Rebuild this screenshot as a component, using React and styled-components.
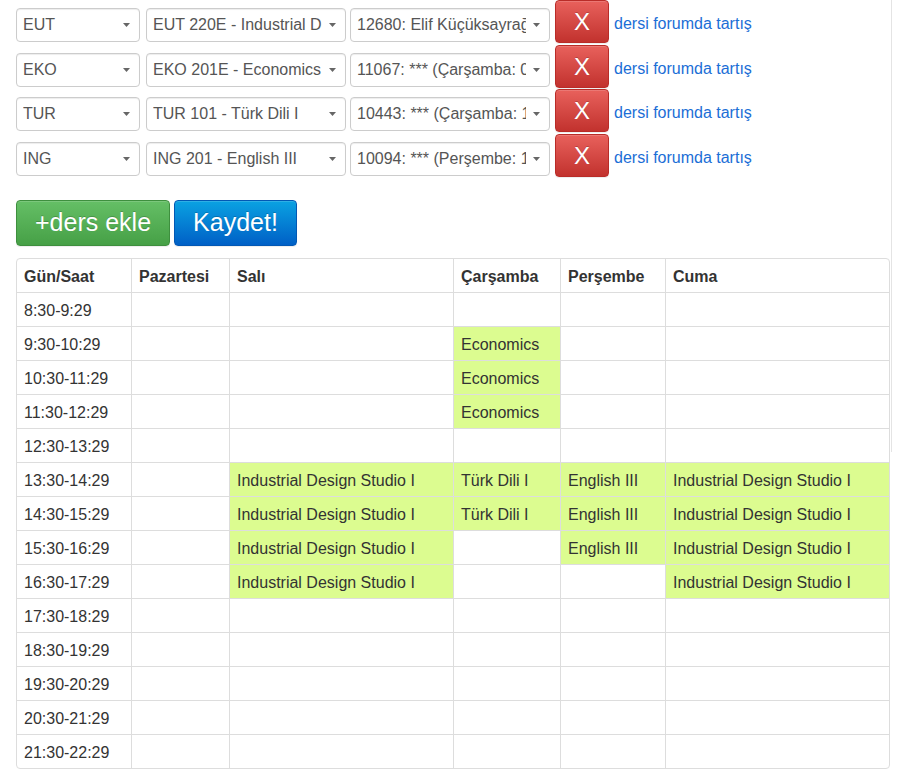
import React from 'react'
import styled, {createGlobalStyle} from 'styled-components'

const GlobalStyle = createGlobalStyle`
  body {
    margin: 0;
    background: #fff;
    font-family: "Liberation Sans", Arial, sans-serif;
    font-size: 16px;
    color: #333;
  }
`

const courses = [
  {dept: 'EUT', course: 'EUT 220E - Industrial Design Studio I', crn: '12680: Elif Küçüksayrağı (Salı: 13:30-17:29)'},
  {dept: 'EKO', course: 'EKO 201E - Economics', crn: '11067: *** (Çarşamba: 09:30-12:29)'},
  {dept: 'TUR', course: 'TUR 101 - Türk Dili I', crn: '10443: *** (Çarşamba: 13:30-15:29)'},
  {dept: 'ING', course: 'ING 201 - English III', crn: '10094: *** (Perşembe: 13:30-16:29)'},
]

const days = ['Pazartesi', 'Salı', 'Çarşamba', 'Perşembe', 'Cuma']
const colWidths = [114, 98, 224, 107, 105, 224]

const IDS = 'Industrial Design Studio I'
const schedule = {
  '9:30-10:29': {'Çarşamba': 'Economics'},
  '10:30-11:29': {'Çarşamba': 'Economics'},
  '11:30-12:29': {'Çarşamba': 'Economics'},
  '13:30-14:29': {'Salı': IDS, 'Çarşamba': 'Türk Dili I', 'Perşembe': 'English III', 'Cuma': IDS},
  '14:30-15:29': {'Salı': IDS, 'Çarşamba': 'Türk Dili I', 'Perşembe': 'English III', 'Cuma': IDS},
  '15:30-16:29': {'Salı': IDS, 'Perşembe': 'English III', 'Cuma': IDS},
  '16:30-17:29': {'Salı': IDS, 'Cuma': IDS},
}

const hours = []
for (let h = 8; h <= 21; h++) hours.push(`${h}:30-${h + 1}:29`)

function Arrow() {
  return (
    <ArrowIcon width="7" height="4" viewBox="0 0 7 4">
      <path d="M0 0 L7 0 L3.5 4 Z" fill="#666" />
    </ArrowIcon>
  )
}

function App() {
  return (
    <Page>
      <GlobalStyle />
      {courses.map((c, i) => (
        <CourseRow key={i}>
          <SelectBox width={124} gap={6}><SelectText>{c.dept}</SelectText><Arrow /></SelectBox>
          <SelectBox width={200} gap={4}><SelectText>{c.course}</SelectText><Arrow /></SelectBox>
          <SelectBox width={200} gap={5}><SelectText>{c.crn}</SelectText><Arrow /></SelectBox>
          <DeleteButton>X</DeleteButton>
          <ForumLink href="#">dersi forumda tartış</ForumLink>
        </CourseRow>
      ))}
      <ActionBar>
        <BigButton variant="success">+ders ekle</BigButton>
        <BigButton variant="primary">Kaydet!</BigButton>
      </ActionBar>
      <Schedule>
        <colgroup>
          {colWidths.map((w, i) => <col key={i} style={{width: w}} />)}
        </colgroup>
        <thead>
          <tr>
            <Th>Gün/Saat</Th>
            {days.map(d => <Th key={d}>{d}</Th>)}
          </tr>
        </thead>
        <tbody>
          {hours.map(h => (
            <tr key={h}>
              <Td>{h}</Td>
              {days.map(d => {
                const lesson = schedule[h] && schedule[h][d]
                return <Td key={d} filled={!!lesson}>{lesson}</Td>
              })}
            </tr>
          ))}
        </tbody>
      </Schedule>
    </Page>
  )
}

export default App

const Page = styled.div`
position: relative;
padding: 0 16px;
height: 780px;
box-sizing: border-box;

&::after {
  content: '';
  position: absolute;
  left: 891px;
  top: 0;
  width: 1px;
  height: 452px;
  background: #e4e4e4;
}
`

const CourseRow = styled.div`
display: flex;
align-items: flex-start;
height: 44.67px;
`

const SelectBox = styled.div`
position: relative;
box-sizing: border-box;
width: ${p => p.width}px;
height: 34px;
margin-top: 8px;
margin-right: ${p => p.gap}px;
border: 1px solid #ccc;
border-radius: 4px;
box-shadow: inset 0 1px 1px rgba(0,0,0,.075);
background: #fff;
display: flex;
align-items: center;
padding: 0 23px 0 6px;
`

const SelectText = styled.div`
flex: 1;
overflow: hidden;
white-space: nowrap;
color: #555;
font-size: 16px;
line-height: 32px;
`

const ArrowIcon = styled.svg`
position: absolute;
right: 9px;
top: 14px;
`

const DeleteButton = styled.button`
box-sizing: border-box;
width: 54px;
height: 43px;
padding: 0;
margin-right: 5px;
border: 1px solid #b92c28;
border-radius: 4px;
background: linear-gradient(to bottom, #e8615c 0%, #c2322e 100%);
box-shadow: inset 0 1px 0 rgba(255,255,255,.15), 0 1px 1px rgba(0,0,0,.075);
color: #fff;
font-family: "Liberation Sans", Arial, sans-serif;
font-size: 24px;
line-height: 41px;
text-shadow: 0 -1px 0 rgba(0,0,0,.2);
cursor: pointer;
`

const ForumLink = styled.a`
margin-top: 8px;
line-height: 32px;
font-size: 16px;
color: #1b6ed6;
text-decoration: none;
`

const ActionBar = styled.div`
display: flex;
gap: 4px;
margin-top: 21px;
`

const BigButton = styled.button`
box-sizing: border-box;
height: 46px;
padding: 0 18px;
border-radius: 4px;
border: 1px solid ${p => p.variant === 'success' ? '#3e8f3e' : '#0258b4'};
background: ${p => p.variant === 'success'
  ? 'linear-gradient(to bottom, #65bf66 0%, #46a046 100%)'
  : 'linear-gradient(to bottom, #0aa2e2 0%, #0060c6 100%)'};
box-shadow: inset 0 1px 0 rgba(255,255,255,.15), 0 1px 1px rgba(0,0,0,.075);
color: #fff;
font-family: "Liberation Sans", Arial, sans-serif;
font-size: 25px;
text-shadow: 0 -1px 0 rgba(0,0,0,.2);
cursor: pointer;
`

const Schedule = styled.table`
margin-top: 12px;
width: 874px;
table-layout: fixed;
border-collapse: separate;
border-spacing: 0;
border: 1px solid #ddd;
border-radius: 4px;
font-size: 16px;
color: #333;
`

const Th = styled.th`
box-sizing: border-box;
text-align: left;
font-weight: bold;
padding: 9px 7px 7px;
line-height: 17px;
border-left: 1px solid #ddd;
&:first-child { border-left: 0; }
`

const Td = styled.td`
box-sizing: border-box;
padding: 9px 7px 7px;
line-height: 17px;
height: 34px;
white-space: nowrap;
border-top: 1px solid #ddd;
border-left: 1px solid #ddd;
background: ${p => p.filled ? '#dcfc90' : 'transparent'};
&:first-child { border-left: 0; }
`
